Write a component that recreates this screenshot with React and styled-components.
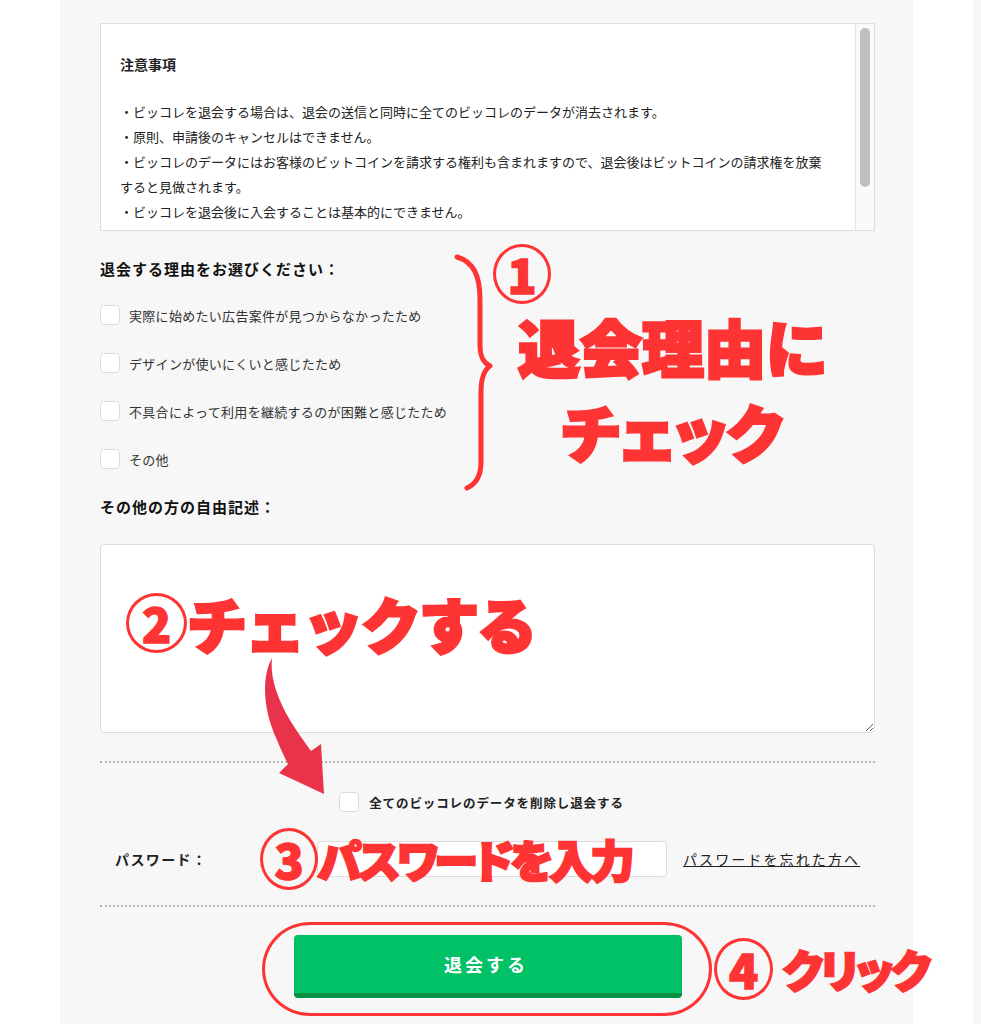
import styled, { createGlobalStyle } from "styled-components"

const GlobalStyle = createGlobalStyle`
  html, body {
    margin: 0;
    padding: 0;
    background: #fff;
  }
  body {
    font-family: "Noto Sans CJK JP", "Noto Sans", sans-serif;
    color: #222;
  }
`

const RED = "#fe3434"

const Page = styled.div`
  position: relative;
  width: 981px;
  height: 1024px;
  overflow: hidden;
  display: flex;
  background: #fff;
`

const Panel = styled.main`
  margin-left: 60px;
  width: 853px;
  box-sizing: border-box;
  padding: 23px 38px 0 40px;
  background: #f7f7f7;
  display: flex;
  flex-direction: column;
`

const Edge = styled.div`
  margin-left: auto;
  width: 8px;
  background: #f7f7f7;
`

const Notice = styled.section`
  height: 208px;
  box-sizing: border-box;
  border: 1px solid #dedede;
  background: #fff;
  display: flex;
  overflow: hidden;
`

const NoticeBody = styled.div`
  flex: 1;
  padding: 28px 26px 0 19px;
  font-size: 13px;
  line-height: 25px;
  color: #222;
`

const NoticeTitle = styled.h3`
  margin: 0 0 22px;
  font-size: 14px;
  font-weight: 700;
  line-height: 25px;
`

const NoticeLine = styled.p`
  margin: 0;
`

const ScrollTrack = styled.div`
  width: 19px;
  border-left: 1px solid #e6e6e6;
  background: #fafafa;
  padding: 4px 0 0 4px;
  box-sizing: border-box;
`

const ScrollThumb = styled.div`
  width: 10px;
  height: 159px;
  border-radius: 5px;
  background: #bfbfbf;
`

const Heading = styled.h4`
  margin: ${(p) => p.$mt || 0}px 0 0;
  font-size: 15px;
  font-weight: 700;
  line-height: 24px;
  letter-spacing: 1px;
  color: #111;
`

const Options = styled.div`
  margin-top: 10px;
  display: flex;
  flex-direction: column;
`

const Option = styled.label`
  height: 48px;
  display: flex;
  align-items: center;
  gap: 9px;
  font-size: 13px;
  letter-spacing: 0.3px;
  color: #333;
`

const Box = styled.input.attrs({ type: "checkbox" })`
  appearance: none;
  margin: 0;
  width: 20px;
  height: 20px;
  flex: none;
  box-sizing: border-box;
  border: 1px solid #dcdcdc;
  border-radius: 4px;
  background: #fff;
`

const FreeText = styled.textarea`
  margin-top: 25px;
  height: 189px;
  width: 100%;
  box-sizing: border-box;
  border: 1px solid #dcdcdc;
  border-radius: 4px;
  background: #fff;
  resize: vertical;
  font: inherit;
`

const Dots = styled.hr`
  margin: ${(p) => p.$mt}px 0 0;
  border: none;
  border-top: 2px dotted #b4b4b4;
  height: 0;
`

const ConfirmRow = styled.label`
  margin-top: 29px;
  align-self: center;
  margin-right: 12px;
  display: flex;
  align-items: center;
  gap: 10px;
  font-size: 12.5px;
  font-weight: 700;
  letter-spacing: 0.9px;
  color: #222;
`

const PasswordRow = styled.div`
  margin-top: 29px;
  display: flex;
  align-items: center;
  padding-left: 15px;
`

const PasswordLabel = styled.span`
  width: 202px;
  font-size: 14px;
  font-weight: 700;
  letter-spacing: 1.4px;
`

const PasswordInput = styled.input.attrs({ type: "password" })`
  width: 350px;
  height: 36px;
  box-sizing: border-box;
  border: 1px solid #dcdcdc;
  border-radius: 4px;
  background: #fff;
`

const ForgotLink = styled.a`
  margin-left: 16px;
  font-size: 14px;
  letter-spacing: 2.1px;
  color: #222;
  text-decoration: underline;
`

const SubmitButton = styled.button`
  margin-top: 28px;
  align-self: center;
  width: 388px;
  height: 63px;
  box-sizing: border-box;
  border: none;
  border-bottom: 5px solid #0b9146;
  border-radius: 4px;
  background: #00c166;
  color: #fff;
  font-family: inherit;
  font-size: 18px;
  font-weight: 700;
  letter-spacing: 3px;
  padding-left: 3px;
`

/* red hand-written notes laid over the form */

const Note = styled.div`
  position: absolute;
  left: ${(p) => p.$x}px;
  top: ${(p) => p.$y}px;
  display: flex;
  align-items: center;
  color: ${RED};
  font-family: "Noto Sans CJK JP", sans-serif;
  font-weight: 900;
  white-space: nowrap;
`

const Ring = styled.span`
  width: ${(p) => p.$w}px;
  height: ${(p) => p.$h}px;
  box-sizing: border-box;
  border: 3px solid ${RED};
  border-radius: 50%;
  display: flex;
  align-items: center;
  justify-content: center;
  font-size: ${(p) => p.$size}px;
  line-height: 1;
  padding-bottom: 2px;
  flex: none;
  -webkit-text-stroke: 1.5px ${RED};
`

const NoteText = styled.span`
  font-size: ${(p) => p.$size}px;
  letter-spacing: ${(p) => p.$ls || 0}px;
  line-height: ${(p) => p.$lh || 1.1};
  margin-left: ${(p) => p.$ml || 0}px;
  text-align: center;
  font-feature-settings: ${(p) => (p.$palt ? '"palt"' : "normal")};
  -webkit-text-stroke: ${(p) => p.$stroke || 2}px ${RED};
`

const Stadium = styled.div`
  position: absolute;
  left: 262px;
  top: 922px;
  width: 450px;
  height: 94px;
  box-sizing: border-box;
  border: 3px solid ${RED};
  border-radius: 48px / 47px;
`

const Overlay = styled.svg`
  position: absolute;
  left: 0;
  top: 0;
  pointer-events: none;
`

const reasons = [
  "実際に始めたい広告案件が見つからなかったため",
  "デザインが使いにくいと感じたため",
  "不具合によって利用を継続するのが困難と感じたため",
  "その他"
]

const notices = [
  "・ビッコレを退会する場合は、退会の送信と同時に全てのビッコレのデータが消去されます。",
  "・原則、申請後のキャンセルはできません。",
  "・ビッコレのデータにはお客様のビットコインを請求する権利も含まれますので、退会後はビットコインの請求権を放棄すると見做されます。",
  "・ビッコレを退会後に入会することは基本的にできません。"
]

const App = () => {
  return (
    <>
      <GlobalStyle />
      <Page>
        <Panel>
          <Notice>
            <NoticeBody>
              <NoticeTitle>注意事項</NoticeTitle>
              {notices.map((n) => (
                <NoticeLine key={n}>{n}</NoticeLine>
              ))}
            </NoticeBody>
            <ScrollTrack>
              <ScrollThumb />
            </ScrollTrack>
          </Notice>

          <Heading $mt={26}>退会する理由をお選びください：</Heading>
          <Options>
            {reasons.map((r) => (
              <Option key={r}>
                <Box />
                {r}
              </Option>
            ))}
          </Options>

          <Heading $mt={12}>その他の方の自由記述：</Heading>
          <FreeText />

          <Dots $mt={28} />
          <ConfirmRow>
            <Box />
            全てのビッコレのデータを削除し退会する
          </ConfirmRow>

          <PasswordRow>
            <PasswordLabel>パスワード：</PasswordLabel>
            <PasswordInput />
            <ForgotLink href="#">パスワードを忘れた方へ</ForgotLink>
          </PasswordRow>

          <Dots $mt={28} />
          <SubmitButton>退会する</SubmitButton>
        </Panel>
        <Edge />

        <Overlay width="981" height="1024" viewBox="0 0 981 1024">
          <path
            d="M457 257 C474 262 480 276 480 300 L480 345 C480 358 484 363 490 366 C484 370 481 377 481 392 L481 462 C481 476 476 484 467 488"
            fill="none"
            stroke={RED}
            strokeWidth="5"
            strokeLinecap="round"
            strokeLinejoin="round"
          />
          <path
            d="M272 658 C262 676 262 708 277 740 C281 750 285 758 288 764 L279 773 L324 794 L321 744 L311 751 C296 730 283 712 276 690 C272 678 271 668 272 658 Z"
            fill="#e8334a"
          />
        </Overlay>

        <Note $x={493} $y={244}>
          <Ring $w={58} $h={60} $size={48}>1</Ring>
        </Note>
        <Note $x={518} $y={304}>
          <NoteText $size={62} $lh={1.37} $palt $stroke={3}>
            退会理由に
            <br />
            チェック
          </NoteText>
        </Note>

        <Note $x={126} $y={590}>
          <Ring $w={61} $h={60} $size={48}>2</Ring>
          <NoteText $size={60} $ls={-2} $stroke={3}>チェックする</NoteText>
        </Note>

        <Note $x={260} $y={828}>
          <Ring $w={58} $h={62} $size={48}>3</Ring>
          <NoteText $size={44} $ls={-3} $palt $stroke={2.5}>パスワードを入力</NoteText>
        </Note>

        <Stadium />
        <Note $x={714} $y={938}>
          <Ring $w={59} $h={62} $size={48}>4</Ring>
          <NoteText $size={44} $ls={-2} $ml={10} $palt $stroke={2.5}>クリック</NoteText>
        </Note>
      </Page>
    </>
  )
}

export default App
